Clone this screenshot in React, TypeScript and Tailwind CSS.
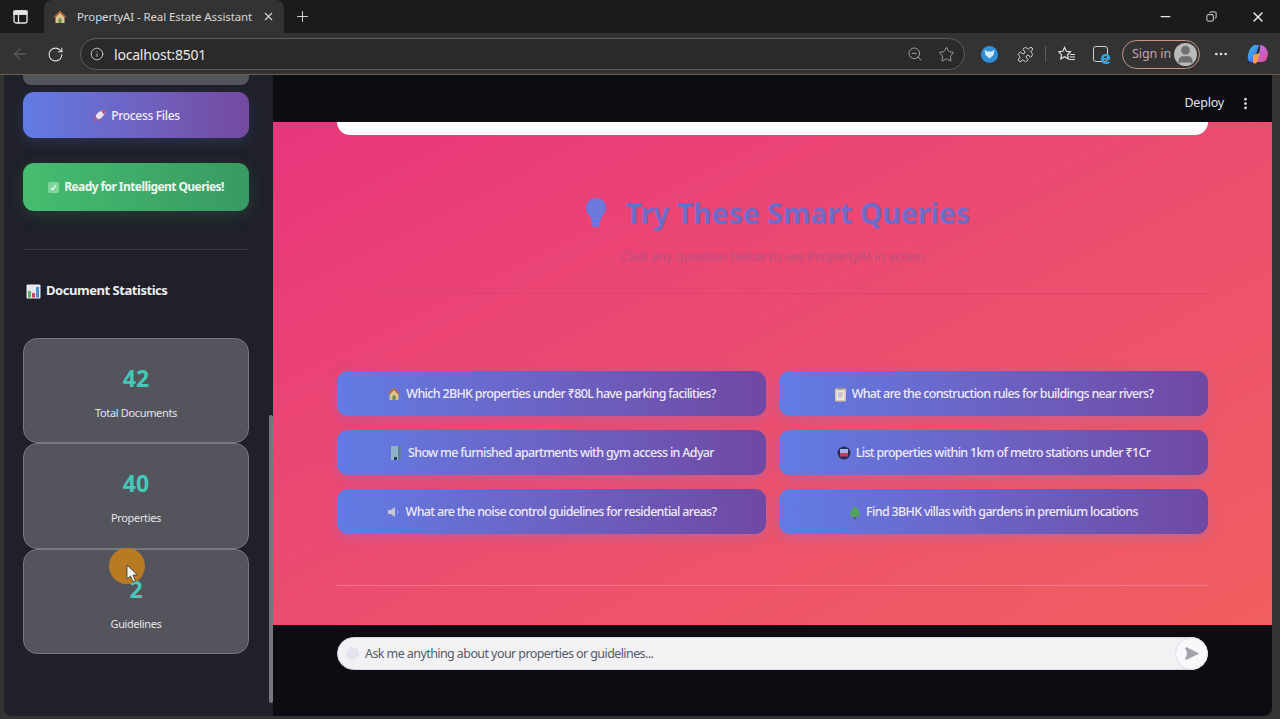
import { ArrowLeft, RotateCw, Info, ZoomOut, Star, Puzzle, MoreHorizontal, Plus, X, Minus, Copy, User, MoreVertical, SendHorizontal } from 'lucide-react';

const HouseIcon = () => (
  <svg width="14" height="14" viewBox="0 0 14 14" className="shrink-0">
    <path d="M7 1 L13 7 L11.5 7 L11.5 13 L2.5 13 L2.5 7 L1 7 Z" fill="#d9c48f" />
    <path d="M7 1 L13 7 L11.5 7.500 L7 3 L2.5 7.500 L1 7 Z" fill="#b5562f" />
    <rect x="5.500" y="8.500" width="3" height="4.500" fill="#6d8a4a" />
  </svg>
);

const BuildingIcon = () => (
  <svg width="14" height="16" viewBox="0 0 14 16" className="shrink-0">
    <rect x="2" y="1" width="10" height="14" fill="#8fb4c9" />
    <rect x="9" y="1" width="3" height="14" fill="#5f7f95" />
    <rect x="5" y="12" width="3" height="3" fill="#2f3b52" />
  </svg>
);

const SpeakerIcon = () => (
  <svg width="14" height="12" viewBox="0 0 14 12" className="shrink-0">
    <path d="M1 4 H4 L8 1 V11 L4 8 H1 Z" fill="#c9c9d6" />
    <path d="M10 4 Q12 6 10 8" fill="none" stroke="#6f9be8" strokeWidth="1.500" />
  </svg>
);

const ClipboardIcon = () => (
  <svg width="13" height="15" viewBox="0 0 13 15" className="shrink-0">
    <rect x="1" y="1.500" width="11" height="13" rx="1" fill="#d8c4a8" />
    <rect x="2.500" y="3.500" width="8" height="9.500" fill="#ece8ec" />
    <rect x="4" y="0.500" width="5" height="2" fill="#8d8d9e" />
    <path d="M4 6 H9 M4 8 H9 M4 10 H8" stroke="#9a9ab0" strokeWidth="0.800" />
  </svg>
);

const MetroIcon = () => (
  <svg width="14" height="14" viewBox="0 0 14 14" className="shrink-0">
    <circle cx="7" cy="7" r="6.500" fill="#2b2a55" />
    <rect x="3" y="3" width="8" height="4" fill="#9fb4ea" />
    <rect x="3" y="7" width="8" height="3.500" fill="#c23c5c" />
  </svg>
);

const TreeIcon = () => (
  <svg width="12" height="15" viewBox="0 0 12 15" className="shrink-0">
    <path d="M6 1 C9 3 11 8 11 11 C8 12.500 4 12.500 1 11 C1 8 3 3 6 1 Z" fill="#4fa35a" />
    <rect x="5" y="12" width="2" height="2.500" fill="#7a5a3a" />
  </svg>
);

const ChartIcon = () => (
  <svg width="15" height="15" viewBox="0 0 15 15" className="shrink-0">
    <rect x="0.500" y="0.500" width="14" height="14" rx="1" fill="#e8e8ee" />
    <rect x="2" y="7" width="3" height="6.500" fill="#58b368" />
    <rect x="6" y="9" width="3" height="4.500" fill="#d83c5c" />
    <rect x="10" y="3" width="3" height="10.500" fill="#4d8fd6" />
  </svg>
);

const RocketIcon = () => (
  <svg width="14" height="14" viewBox="0 0 14 14" className="shrink-0">
    <path d="M13 1 C9 1 5 3.500 3.500 7.500 L6.500 10.500 C10.500 9 13 5 13 1 Z" fill="#ece4ee" />
    <path d="M13 1 C11.500 1 10 1.300 8.800 2 L12 5.200 C12.700 4 13 2.500 13 1 Z" fill="#d8435c" />
    <path d="M3.500 7.500 L1 8 L3 5.500 Z M6.500 10.500 L6 13 L8.500 11 Z" fill="#d8435c" />
    <path d="M3.500 8.500 L5.500 10.500 L2 12 Z" fill="#e2574c" />
  </svg>
);

const queries = [
  { icon: <HouseIcon />, text: 'Which 2BHK properties under ₹80L have parking facilities?' },
  { icon: <ClipboardIcon />, text: 'What are the construction rules for buildings near rivers?' },
  { icon: <BuildingIcon />, text: 'Show me furnished apartments with gym access in Adyar' },
  { icon: <MetroIcon />, text: 'List properties within 1km of metro stations under ₹1Cr' },
  { icon: <SpeakerIcon />, text: 'What are the noise control guidelines for residential areas?' },
  { icon: <TreeIcon />, text: 'Find 3BHK villas with gardens in premium locations' },
];

const stats = [
  { value: '42', label: 'Total Documents' },
  { value: '40', label: 'Properties' },
  { value: '2', label: 'Guidelines' },
];

function BrowserChrome() {
  return (
    <div>
      <div className="h-[33px] bg-[#1b1b1b] flex items-end text-[#d8d8d8]">
        <div className="w-[44px] h-[33px] flex items-center pl-[13px]">
          <svg width="15" height="14" viewBox="0 0 15 14" fill="none" stroke="#e6e6e6" strokeWidth="1.300">
            <rect x="1" y="1" width="13" height="12" rx="2" />
            <path d="M1 4 H14 M5.500 4 V13" />
            <rect x="1" y="1" width="13" height="3" fill="#e6e6e6" />
          </svg>
        </div>
        <div className="w-[240px] h-[33px] bg-[#333333] rounded-t-lg flex items-center pl-[9px] pr-[9px]">
          <HouseIcon />
          <span className="ml-[10px] text-[11.500px] leading-none whitespace-nowrap tracking-[-0.1px]">PropertyAI - Real Estate Assistant</span>
          <X size={13} className="ml-auto shrink-0 text-[#d8d8d8]" />
        </div>
        <div className="h-[33px] flex items-center ml-[10px]">
          <Plus size={17} strokeWidth={1.300} className="text-[#e0e0e0]" />
        </div>
        <div className="ml-auto h-[33px] flex items-center pr-[14px] gap-[33px]">
          <Minus size={15} className="text-[#e6e6e6]" />
          <Copy size={11} className="text-[#e6e6e6] -scale-x-100" />
          <X size={16} className="text-[#f0f0f0]" />
        </div>
      </div>
      <div className="h-[42px] bg-[#333333] flex items-center pl-[11px] pr-[10px] pt-px border-b border-[#6d5a48]">
        <ArrowLeft size={18} strokeWidth={1.300} className="text-[#707070]" />
        <RotateCw size={17} strokeWidth={1.500} className="ml-[18px] text-[#e0e0e0]" />
        <div className="ml-[16px] w-[885px] h-[32px] rounded-full bg-[#2a2a2a] border border-[#5c5c5c] flex items-center pl-[9px] pr-[9px]">
          <Info size={14} strokeWidth={1.500} className="text-[#d0d0d0]" />
          <span className="ml-[10px] text-[14px] tracking-[-0.2px] text-[#e8e8e8]">localhost:8501</span>
          <ZoomOut size={16} strokeWidth={1.400} className="ml-auto text-[#a8a8a8]" />
          <Star size={17} strokeWidth={1.300} className="ml-[15px] text-[#a8a8a8]" />
        </div>
        <div className="ml-[16px] w-[17px] h-[17px] rounded-full bg-[#2f8fd8] flex items-center justify-center">
          <svg width="11" height="10" viewBox="0 0 11 10"><path d="M0.500 0.500 L3 2.500 H8 L10.500 0.500 L9.500 6 L5.500 9.500 L1.500 6 Z" fill="#d5ecff" /></svg>
        </div>
        <Puzzle size={17} strokeWidth={1.400} className="ml-[19px] text-[#d8d8d8]" />
        <div className="ml-[11px] w-px h-[16px] bg-[#5c5c5c]" />
        <svg width="18" height="17" viewBox="0 0 18 17" fill="none" stroke="#e0e0e0" strokeWidth="1.200" className="ml-[12px]">
          <path d="M6.500 1.500 L8.300 5.300 L12.500 5.800 L9.500 8.700 L10.200 12.800 L6.500 10.800 L2.800 12.800 L3.500 8.700 L0.700 5.800 L4.800 5.300 Z" />
          <path d="M12 8.500 H17 M11.500 11 H17 M11 13.500 H17" />
        </svg>
        <div className="ml-[17px] relative w-[15px] h-[16px] rounded-[3px] border border-[#cfcfcf]">
          <span className="absolute -right-[4px] -bottom-[5px] text-[18px] leading-[18px] font-bold text-[#2fa3e0]">e</span>
        </div>
        <div className="ml-[14px] w-[78px] h-[29px] rounded-full border border-[#c9918a] flex items-center pl-[9px] pr-[2px] justify-between">
          <span className="text-[12.500px] tracking-[-0.1px] text-[#c9a6a2]">Sign in</span>
          <div className="w-[23px] h-[23px] rounded-full bg-[#b9b9b9] overflow-hidden flex items-center justify-center">
            <User size={21} fill="#6f6f6f" stroke="#6f6f6f" />
          </div>
        </div>
        <MoreHorizontal size={16} className="ml-[13px] text-[#e0e0e0]" />
        <svg width="24" height="22" viewBox="0 0 24 22" className="ml-[17px]">
          <defs>
            <linearGradient id="cp1" x1="0" y1="0" x2="1" y2="1"><stop offset="0" stopColor="#3fc3f0" /><stop offset="1" stopColor="#3a5fe0" /></linearGradient>
            <linearGradient id="cp2" x1="0" y1="0" x2="1" y2="1"><stop offset="0" stopColor="#a87af0" /><stop offset="1" stopColor="#e84a9a" /></linearGradient>
          </defs>
          <path d="M8 2 H13 L9 15 C8 19 5 20 3 18 C0 15 3 5 8 2 Z" fill="url(#cp1)" />
          <path d="M14 2 C19 2 24 8 21 15 C20 18 18 19 15 19 H10 L14 7 Z" fill="url(#cp2)" />
          <path d="M7 12 L14 10 L11 19 C10 21 7 21 7 19 Z" fill="#f4a03c" />
        </svg>
      </div>
    </div>
  );
}

function Sidebar() {
  return (
    <aside className="relative w-[269px] shrink-0 bg-[#1f2029] rounded-bl-lg overflow-hidden pl-[19px] pr-[24px]">
      <div className="h-[10px] rounded-b-lg bg-[#54555c]" />
      <button className="mt-[7px] w-full h-[46px] pt-px rounded-[11px] bg-gradient-to-r from-[#617ce4] to-[#7449a0] shadow-[0_4px_14px_rgba(102,126,234,0.2)] flex items-center justify-center gap-[5px] text-[12px] tracking-[-0.3px] font-medium text-[#f0eef8]">
        <RocketIcon />
        Process Files
      </button>
      <div className="mt-[25px] h-[48px] rounded-[11px] bg-gradient-to-r from-[#46bd70] to-[#389a62] shadow-[0_4px_16px_rgba(72,199,116,0.18)] flex items-center justify-center gap-[5px] text-[12px] tracking-[-0.57px] font-bold text-[#eef8f1]">
        <span className="w-[11px] h-[11px] rounded-[2px] bg-[#7fd69c] flex items-center justify-center text-[9px] leading-none text-white">✓</span>
        Ready for Intelligent Queries!
      </div>
      <hr className="mt-[38px] border-[#3a3b44]" />
      <h3 className="mt-[32px] ml-[3px] h-[18px] flex items-center gap-[5px] text-[13px] tracking-[-0.46px] font-bold text-[#eeeef2]">
        <ChartIcon />
        Document Statistics
      </h3>
      <div className="mt-[38px] flex flex-col">
        {stats.map(s => (
          <div key={s.label} className="h-[105.330px] rounded-[14px] bg-[#54555c] border border-[#787980] flex flex-col items-center">
            <span className="mt-[23px] h-[32px] text-[23px] leading-[32px] font-bold text-[#44c8b8]">{s.value}</span>
            <span className="mt-[11px] text-[11px] tracking-[-0.35px] text-[#e4e4e8]">{s.label}</span>
          </div>
        ))}
      </div>
      {/* scrollbar and cursor highlight sit over the panel */}
      <div className="absolute right-0 top-[340px] w-[4px] h-[288px] rounded-full bg-[#77787e]" />
      <div className="absolute left-[105px] top-[473px] w-[36px] h-[36px] rounded-full bg-[#b87a22]" />
      <svg width="14" height="20" viewBox="0 0 14 20" className="absolute left-[121px] top-[489px]">
        <path d="M2 1 V15 L5.500 12 L8 18 L10.500 17 L8 11 L12.500 11 Z" fill="#f4f4f4" stroke="#333" strokeWidth="0.800" />
      </svg>
    </aside>
  );
}

function Main() {
  return (
    <main className="flex-1 flex flex-col min-w-0 rounded-br-lg overflow-hidden">
      <header className="h-[47px] shrink-0 bg-[#0b0d12] flex items-center justify-end pt-[10px] pr-[19px] gap-[14px] text-[#e4e4e8]">
        <span className="text-[12.500px] tracking-[-0.2px]">Deploy</span>
        <MoreVertical size={15} strokeWidth={2.400} />
      </header>
      <section className="h-[503px] shrink-0 bg-gradient-to-br from-[#e8357c] to-[#f05f60] pl-[64px] pr-[64px]">
        <div className="h-[13px] bg-white rounded-b-2xl" />
        <div className="mt-[59px] h-[38px] pl-[9px] flex items-center justify-center gap-[18px]">
          <svg width="24" height="32" viewBox="1 0 22 32">
            <path d="M12 1 C18 1 22 5.500 22 11 C22 15 19.500 17 17.500 20 L16.500 24 H7.500 L6.500 20 C4.500 17 2 15 2 11 C2 5.500 6 1 12 1 Z" fill="#6c78dc" />
            <rect x="8" y="25" width="8" height="5" rx="2" fill="#6c78dc" />
          </svg>
          <h2 className="text-[28.400px] font-bold text-[#6e6cc8] leading-none">Try These Smart Queries</h2>
        </div>
        <p className="mt-[15px] text-center text-[13px] tracking-[-0.22px] leading-[18px] text-[#b9527f]">Click any question below to see PropertyAI in action</p>
        <hr className="mt-[28px] border-[#d9436e]" />
        <div className="mt-[77px] grid grid-cols-2 gap-x-[13px] gap-y-[14px]">
          {queries.map(q => (
            <button
              key={q.text}
              className="h-[45px] pt-px rounded-[11px] bg-gradient-to-r from-[#617ce4] to-[#6f48a3] shadow-[0_4px_12px_rgba(102,126,234,0.25)] flex items-center justify-center gap-[5px] text-[12.500px] tracking-[-0.68px] font-medium text-[#eeeaf8]"
            >
              {q.icon}
              {q.text}
            </button>
          ))}
        </div>
        <hr className="mt-[51px] border-[#f0778a]" />
      </section>
      <footer className="flex-1 bg-[#0b0d12] pl-[64px] pr-[64px] pt-[12px]">
        <div className="h-[33px] rounded-full bg-[#f2f2f5] border border-[#d6d6e6] flex items-center pl-[8px] text-[#555a66]">
          <span className="w-[13px] h-[13px] rounded-full bg-[#e4e4ee]" />
          <span className="ml-[6px] pt-px text-[12.500px] tracking-[-0.58px]">Ask me anything about your properties or guidelines...</span>
          <span className="ml-auto w-[33px] h-[33px] -mr-px rounded-full bg-[#f8f8fb] border border-[#dcdce6] flex items-center justify-center">
            <SendHorizontal size={15} fill="#a3a3ae" stroke="#a3a3ae" />
          </span>
        </div>
      </footer>
    </main>
  );
}

export default function App() {
  return (
    <div className="w-[1280px] h-[719px] overflow-hidden bg-[#333333] flex flex-col font-['Noto_Sans',sans-serif]">
      <BrowserChrome />
      <div className="h-[641px] flex pl-[4px] pr-[8px]">
        <Sidebar />
        <Main />
      </div>
    </div>
  );
}
